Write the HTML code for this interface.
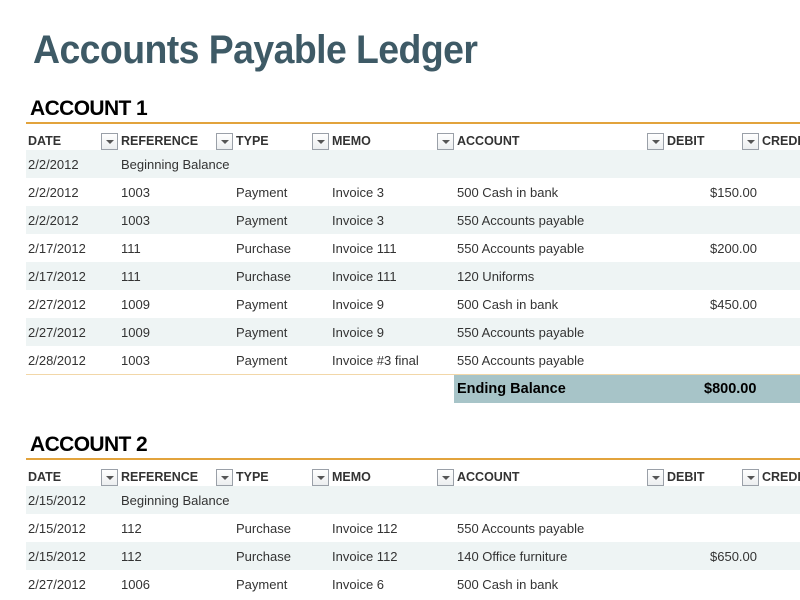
<!DOCTYPE html>
<html><head><meta charset="utf-8"><style>
*{margin:0;padding:0;box-sizing:border-box}
body{width:800px;height:600px;overflow:hidden;background:#fff;font-family:"Liberation Sans",Arial,sans-serif;position:relative;color:#333}
.a{position:absolute;white-space:nowrap}
h1{position:absolute;left:33px;top:28px;font-size:40px;font-weight:bold;color:#3e5a66;letter-spacing:-0.6px;transform:scaleX(0.935);transform-origin:left;white-space:nowrap}
.acct{position:absolute;left:30px;font-size:21px;font-weight:bold;color:#000;letter-spacing:-0.6px}
.line{position:absolute;left:26px;width:774px;height:1px;background:#e2a33c}
.hdr{position:absolute;left:0;width:800px;height:22px;font-size:12.5px;font-weight:bold;color:#333}
.hdr span{position:absolute;top:4px}
.dd{position:absolute;top:3px;width:17px;height:17px;border:1px solid #9aa0a8;background:linear-gradient(#fff,#eceef0)}
.dd:after{content:"";position:absolute;left:4px;top:6px;border-left:4px solid transparent;border-right:4px solid transparent;border-top:4px solid #555}
.row{position:absolute;left:26px;width:774px;height:28px;font-size:13px;color:#333}
.row.l{background:#eef4f4}
.row span{position:absolute;top:7px}
</style></head><body>
<h1>Accounts Payable Ledger</h1>

<div class="acct" style="top:97px">ACCOUNT 1</div>
<div class="line" style="top:122px;height:1.5px"></div>
<div class="hdr" style="top:130px">
<span style="left:28px">DATE</span><div class="dd" style="left:101px"></div>
<span style="left:121px">REFERENCE</span><div class="dd" style="left:216px"></div>
<span style="left:236px">TYPE</span><div class="dd" style="left:312px"></div>
<span style="left:332px">MEMO</span><div class="dd" style="left:437px"></div>
<span style="left:457px">ACCOUNT</span><div class="dd" style="left:647px"></div>
<span style="left:667px">DEBIT</span><div class="dd" style="left:742px"></div>
<span style="left:762px">CREDIT</span>
</div>

<div class="row l" style="top:150px"><span style="left:2px">2/2/2012</span><span style="left:95px">Beginning Balance</span></div>
<div class="row" style="top:178px"><span style="left:2px">2/2/2012</span><span style="left:95px">1003</span><span style="left:210px">Payment</span><span style="left:306px">Invoice 3</span><span style="left:431px">500 Cash in bank</span><span style="left:684px">$150.00</span></div>
<div class="row l" style="top:206px"><span style="left:2px">2/2/2012</span><span style="left:95px">1003</span><span style="left:210px">Payment</span><span style="left:306px">Invoice 3</span><span style="left:431px">550 Accounts payable</span></div>
<div class="row" style="top:234px"><span style="left:2px">2/17/2012</span><span style="left:95px">111</span><span style="left:210px">Purchase</span><span style="left:306px">Invoice 111</span><span style="left:431px">550 Accounts payable</span><span style="left:684px">$200.00</span></div>
<div class="row l" style="top:262px"><span style="left:2px">2/17/2012</span><span style="left:95px">111</span><span style="left:210px">Purchase</span><span style="left:306px">Invoice 111</span><span style="left:431px">120 Uniforms</span></div>
<div class="row" style="top:290px"><span style="left:2px">2/27/2012</span><span style="left:95px">1009</span><span style="left:210px">Payment</span><span style="left:306px">Invoice 9</span><span style="left:431px">500 Cash in bank</span><span style="left:684px">$450.00</span></div>
<div class="row l" style="top:318px"><span style="left:2px">2/27/2012</span><span style="left:95px">1009</span><span style="left:210px">Payment</span><span style="left:306px">Invoice 9</span><span style="left:431px">550 Accounts payable</span></div>
<div class="row" style="top:346px"><span style="left:2px">2/28/2012</span><span style="left:95px">1003</span><span style="left:210px">Payment</span><span style="left:306px">Invoice #3 final</span><span style="left:431px">550 Accounts payable</span></div>
<div class="line" style="top:374px;background:#f2d7a8"></div>
<div class="a" style="left:454px;top:375px;width:346px;height:28px;background:#a7c4c8;font-size:14.5px;font-weight:bold;color:#000">
<span class="a" style="left:3px;top:6px">Ending Balance</span><span class="a" style="left:250px;top:6px">$800.00</span></div>

<div class="acct" style="top:433px">ACCOUNT 2</div>
<div class="line" style="top:458px;height:1.5px"></div>
<div class="hdr" style="top:466px">
<span style="left:28px">DATE</span><div class="dd" style="left:101px"></div>
<span style="left:121px">REFERENCE</span><div class="dd" style="left:216px"></div>
<span style="left:236px">TYPE</span><div class="dd" style="left:312px"></div>
<span style="left:332px">MEMO</span><div class="dd" style="left:437px"></div>
<span style="left:457px">ACCOUNT</span><div class="dd" style="left:647px"></div>
<span style="left:667px">DEBIT</span><div class="dd" style="left:742px"></div>
<span style="left:762px">CREDIT</span>
</div>
<div class="row l" style="top:486px"><span style="left:2px">2/15/2012</span><span style="left:95px">Beginning Balance</span></div>
<div class="row" style="top:514px"><span style="left:2px">2/15/2012</span><span style="left:95px">112</span><span style="left:210px">Purchase</span><span style="left:306px">Invoice 112</span><span style="left:431px">550 Accounts payable</span></div>
<div class="row l" style="top:542px"><span style="left:2px">2/15/2012</span><span style="left:95px">112</span><span style="left:210px">Purchase</span><span style="left:306px">Invoice 112</span><span style="left:431px">140 Office furniture</span><span style="left:684px">$650.00</span></div>
<div class="row" style="top:570px"><span style="left:2px">2/27/2012</span><span style="left:95px">1006</span><span style="left:210px">Payment</span><span style="left:306px">Invoice 6</span><span style="left:431px">500 Cash in bank</span></div>
</body></html>
